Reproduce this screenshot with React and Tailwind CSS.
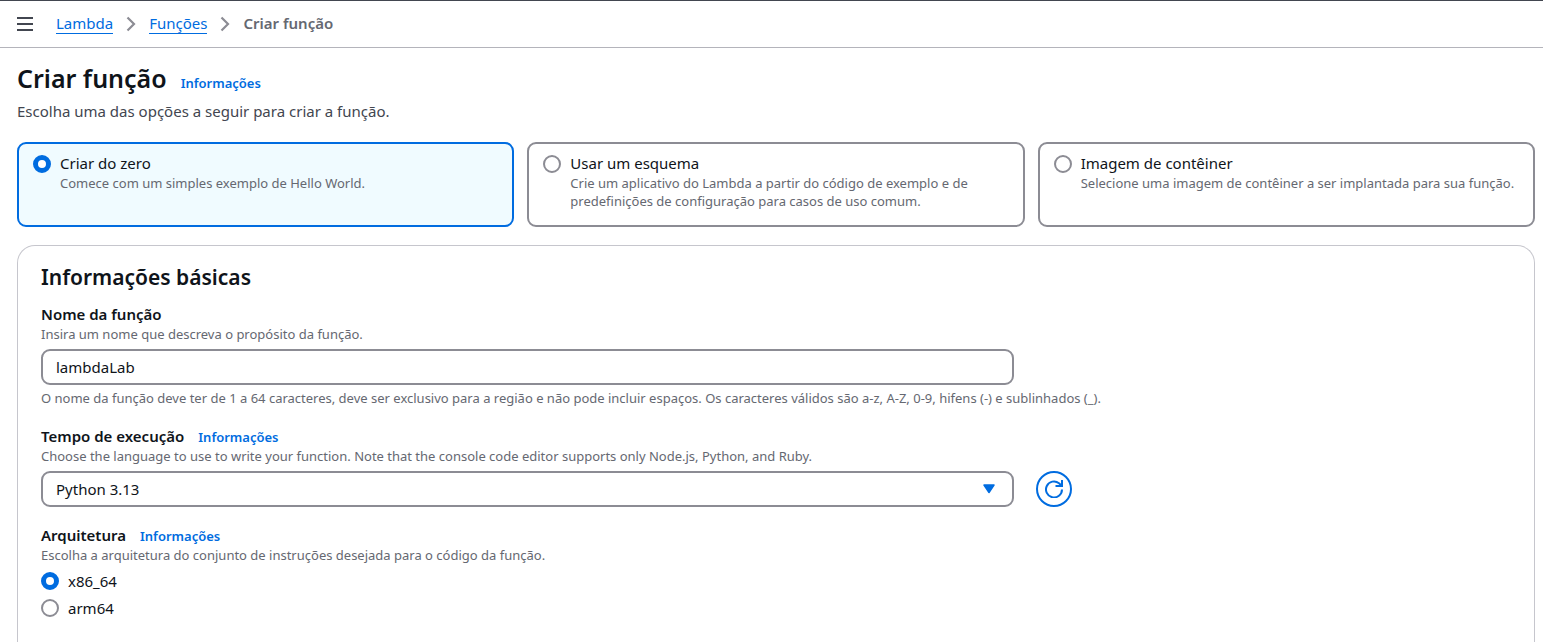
import { useState } from "react";

const RADIO =
  "m-0 size-[18px] shrink-0 appearance-none rounded-full border-2 border-[#8c8c94] bg-white checked:border-[5px] checked:border-[#006ce0]";
const HINT = "text-[13px] leading-[18px] text-[#656871]";
const LABEL = "text-[15px] leading-[22px] font-semibold text-[#0f141a]";
const FIELD =
  "block h-9 w-full appearance-none rounded-[9px] border-2 border-[#8c8c94] bg-white px-[13px] text-[15px] leading-[22px] text-[#0f141a]";

const METHODS = [
  { id: "scratch", title: "Criar do zero", text: "Comece com um simples exemplo de Hello World." },
  {
    id: "blueprint",
    title: "Usar um esquema",
    text: "Crie um aplicativo do Lambda a partir do código de exemplo e de predefinições de configuração para casos de uso comum.",
  },
  {
    id: "container",
    title: "Imagem de contêiner",
    text: "Selecione uma imagem de contêiner a ser implantada para sua função.",
  },
];

function InfoLink() {
  return (
    <a href="#info" className="text-[13px] leading-[18px] font-semibold text-[#006ce0]">
      Informações
    </a>
  );
}

function Chevron() {
  return (
    <svg viewBox="0 0 10 16" className="h-4 w-[10px] shrink-0" fill="none" stroke="#8c8c94" strokeWidth="2.2" aria-hidden="true">
      <path d="M1.5 1.5 8 8l-6.5 6.5" />
    </svg>
  );
}

function Crumb({ children }) {
  return (
    <a href="#crumb" className="border-b border-[#006ce0] leading-5 text-[#006ce0]">
      {children}
    </a>
  );
}

export default function App() {
  const [method, setMethod] = useState("scratch");
  const [name, setName] = useState("lambdaLab");
  const [arch, setArch] = useState("x86_64");

  return (
    <div className="h-screen overflow-hidden bg-white font-['Noto_Sans','Open_Sans',sans-serif] text-[#0f141a]">
      <header className="flex h-12 items-center border-t border-b border-t-[#424650] border-b-[#b4b4bb] pb-px pl-[17px] text-[15px]">
        <button type="button" aria-label="Abrir navegação" className="mr-[23px] flex">
          <svg viewBox="0 0 16 17" className="h-[17px] w-4" stroke="#424650" strokeWidth="2" aria-hidden="true">
            <path d="M0 3h16M0 9h16M0 15h16" />
          </svg>
        </button>
        <nav aria-label="Trilha" className="flex items-center gap-[13px]">
          <Crumb>Lambda</Crumb>
          <Chevron />
          <Crumb>Funções</Crumb>
          <Chevron />
          <span className="font-semibold text-[#656871]">Criar função</span>
        </nav>
      </header>

      <main className="pt-[14px] pr-2 pl-[17px]">
        <div className="flex items-baseline gap-[14px]">
          <h1 className="text-[25px] leading-8 font-semibold">Criar função</h1>
          <InfoLink />
        </div>
        <p className="mt-[6px] text-[15px] leading-[22px] text-[#424650]">Escolha uma das opções a seguir para criar a função.</p>

        <div role="radiogroup" aria-label="Método de criação" className="mt-5 grid grid-cols-3 gap-[13px]">
          {METHODS.map((m) => (
            <label
              key={m.id}
              className="flex min-h-[85px] gap-[9px] rounded-[9px] border-2 border-[#8c8c94] px-[14px] py-2 has-checked:border-[#006ce0] has-checked:bg-[#f0fbff]"
            >
              <input
                type="radio"
                name="method"
                checked={method === m.id}
                onChange={() => setMethod(m.id)}
                className={RADIO + " mt-[3px]"}
              />
              <span>
                <span className="block text-[15px] leading-[22px]">{m.title}</span>
                <span className={HINT + " block"}>{m.text}</span>
              </span>
            </label>
          ))}
        </div>

        <section className="mt-[18px] rounded-t-[18px] border border-b-0 border-[#c6c6cd] px-[23px] pt-4 pb-10">
          <h2 className="text-[21px] leading-[30px] font-semibold">Informações básicas</h2>

          <div className="mt-[11px]">
            <label htmlFor="fn-name" className={LABEL + " block"}>
              Nome da função
            </label>
            <p className={HINT}>Insira um nome que descreva o propósito da função.</p>
            <div className="mt-[6px] grid grid-cols-12 gap-[22px]">
              <div className="col-span-8">
                <input id="fn-name" type="text" value={name} onChange={(e) => setName(e.target.value)} className={FIELD} />
              </div>
            </div>
            <p className={HINT + " mt-1"}>
              O nome da função deve ter de 1 a 64 caracteres, deve ser exclusivo para a região e não pode incluir espaços. Os
              caracteres válidos são a-z, A-Z, 0-9, hifens (-) e sublinhados (_).
            </p>
          </div>

          <div className="mt-[18px]">
            <div className="flex items-baseline gap-[14px]">
              <label htmlFor="runtime" className={LABEL}>
                Tempo de execução
              </label>
              <InfoLink />
            </div>
            <p className={HINT}>
              Choose the language to use to write your function. Note that the console code editor supports only Node.js, Python,
              and Ruby.
            </p>
            <div className="mt-[6px] grid grid-cols-12 gap-[22px]">
              <div className="relative col-span-8">
                <select id="runtime" defaultValue="py313" className={FIELD}>
                  <option value="py313">Python 3.13</option>
                  <option value="node22">Node.js 22.x</option>
                  <option value="ruby34">Ruby 3.4</option>
                </select>
                <svg
                  viewBox="0 0 12 10"
                  className="pointer-events-none absolute top-[13px] right-[19px] h-[10px] w-3"
                  fill="#006ce0"
                  stroke="#006ce0"
                  strokeWidth="1.5"
                  strokeLinejoin="round"
                  aria-hidden="true"
                >
                  <path d="M1 1h10L6 8.5z" />
                </svg>
              </div>
              <button
                type="button"
                aria-label="Atualizar"
                className="flex size-9 items-center justify-center rounded-full border-2 border-[#006ce0]"
              >
                <svg viewBox="0 0 18 18" className="size-[18px]" fill="none" stroke="#006ce0" strokeWidth="2" aria-hidden="true">
                  <path d="M17 9.5A8 8 0 1 1 14 3.2L17 6" />
                  <path d="M17 0v6h-6.5" />
                </svg>
              </button>
            </div>
          </div>

          <fieldset className="mt-[17px]">
            <legend className="flex items-baseline gap-[14px]">
              <span className={LABEL}>Arquitetura</span>
              <InfoLink />
            </legend>
            <p className={HINT}>Escolha a arquitetura do conjunto de instruções desejada para o código da função.</p>
            <div className="mt-[6px] flex flex-col gap-[5px]">
              {["x86_64", "arm64"].map((a) => (
                <label key={a} className="flex items-center gap-[9px] text-[15px] leading-[22px]">
                  <input type="radio" name="arch" checked={arch === a} onChange={() => setArch(a)} className={RADIO} />
                  {a}
                </label>
              ))}
            </div>
          </fieldset>
        </section>
      </main>
    </div>
  );
}
